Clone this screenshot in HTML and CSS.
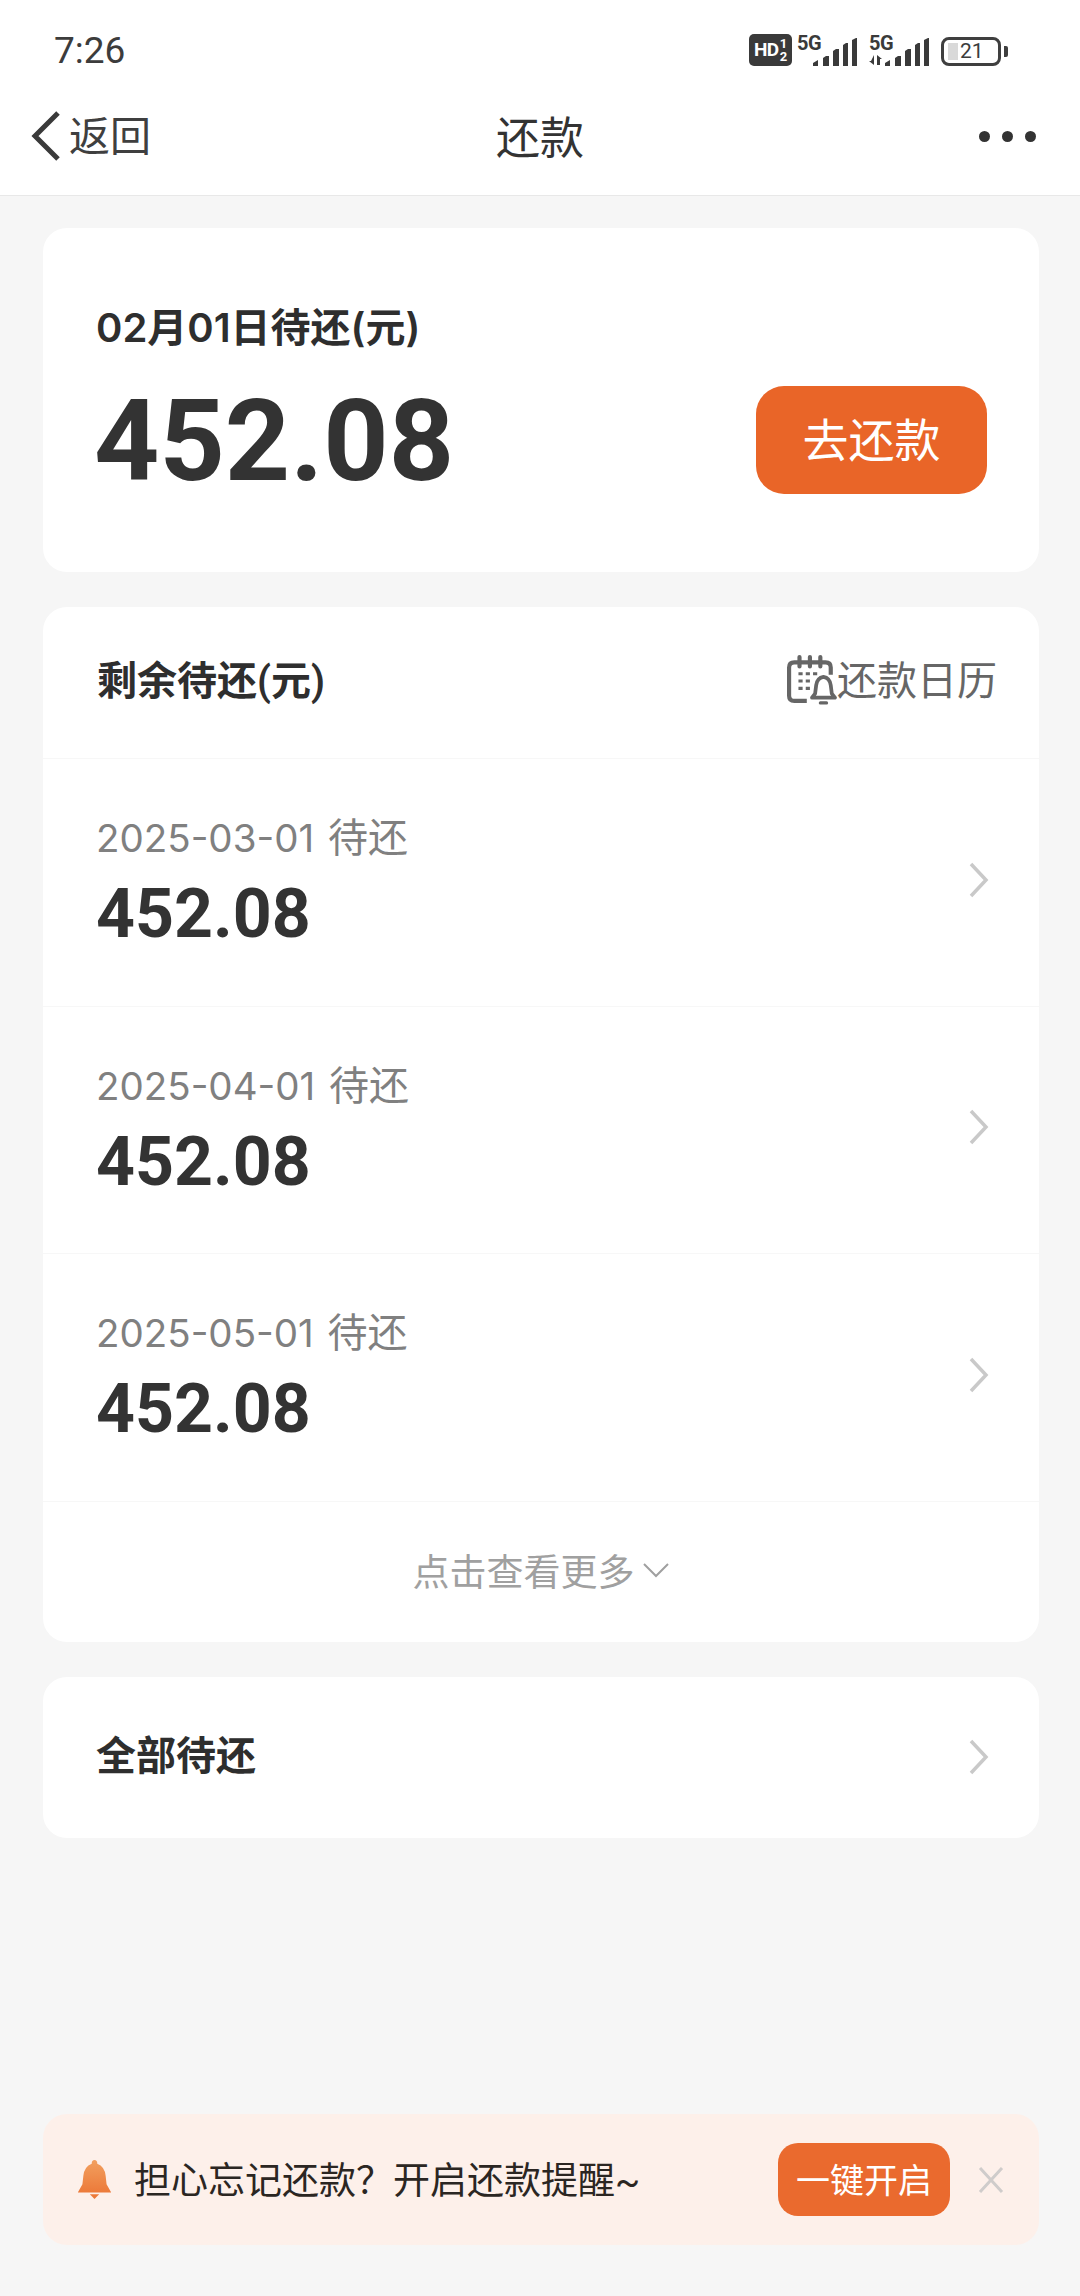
FILE: index.html
```html
<!DOCTYPE html>
<html lang="zh-CN">
<head>
<meta charset="utf-8">
<title>还款</title>
<link rel="stylesheet" href="styles.css">
</head>
<body>
<div class="page">
  <header class="top">
    <div class="status">
      <span class="time">7:26</span>
      <div class="status-icons">
        <span class="hd"><span class="hd-text">HD</span><span class="hd-frac"><span>1</span><span>2</span></span></span>
        <span class="net">
          <span class="fiveg">5G</span>
          <svg class="bars" width="44" height="30" viewBox="0 0 44 30"><path d="M0 30v-3l5-3v6zM10 30v-8l3-2h3v10zM20 30V15l3-2h3v17zM30 30V9l3-2h2v23zM39 30V4l4-2h1v28z" fill="#3a3a3a"/></svg>
        </span>
        <span class="net net2">
          <span class="fiveg">5G<svg class="arrows" width="14" height="10" viewBox="0 0 14 10"><path d="M5 0v10L0 6h2zM8 0l5 4h-2v6H8z" fill="#3a3a3a"/></svg></span>
          <svg class="bars" width="44" height="30" viewBox="0 0 44 30"><path d="M0 30v-3l5-3v6zM10 30v-8l3-2h3v10zM20 30V15l3-2h3v17zM30 30V9l3-2h2v23zM39 30V4l4-2h1v28z" fill="#3a3a3a"/></svg>
        </span>
        <span class="battery"><span class="battery-body"><span class="battery-fill"></span><span class="battery-num">21</span></span><span class="battery-tip"></span></span>
      </div>
    </div>
    <nav class="nav">
      <div class="back">
        <svg width="30" height="50" viewBox="0 0 30 50"><path d="M28 2 5 25l23 23" fill="none" stroke="#3a3a3a" stroke-width="5"/></svg>
        <span class="back-text">返回</span>
      </div>
      <h1 class="title">还款</h1>
      <div class="more"><i></i><i></i><i></i></div>
    </nav>
  </header>

  <main class="content">
    <section class="card due">
      <div class="due-info">
        <div class="due-label">02月01日待还(元)</div>
        <div class="due-amount">452.08</div>
      </div>
      <button class="pay"><span class="pay-text">去还款</span></button>
    </section>

    <section class="card">
      <div class="remain-head">
        <span class="remain-title">剩余待还(元)</span>
        <span class="calendar">
          <svg class="cal-icon" width="50" height="50" viewBox="0 0 48 48" fill="none" stroke="#666" stroke-width="4"><path d="M19 44H7q-5 0-5-5V12q0-5 5-5h30q5 0 5 5v7"/><path d="M12 2v9M22 2v9M32 2v9" stroke-linecap="round"/><path d="M11 18h4M18 18h4M25 18h4M11 25h4M18 25h4M11 32h4M18 32h4" stroke-width="3"/><path d="M35 21q6 1 7 8l1 8 3 4H24l3-4 1-8q1-7 7-8z" fill="#fff" stroke-width="3.6" stroke-linejoin="round"/><path d="M32 46h6" stroke-width="3" stroke-linecap="round"/></svg>
          <span>还款日历</span>
        </span>
      </div>
      <div class="row">
        <div class="row-text"><div class="row-date">2025-03-01 <span class="row-tag">待还</span></div><div class="row-amount">452.08</div></div>
        <svg class="chev" width="20" height="36" viewBox="0 0 20 36"><path d="M2 2l15 16L2 34" fill="none" stroke="#c9c9c9" stroke-width="3.5"/></svg>
      </div>
      <div class="row">
        <div class="row-text"><div class="row-date">2025-04-01 <span class="row-tag">待还</span></div><div class="row-amount">452.08</div></div>
        <svg class="chev" width="20" height="36" viewBox="0 0 20 36"><path d="M2 2l15 16L2 34" fill="none" stroke="#c9c9c9" stroke-width="3.5"/></svg>
      </div>
      <div class="row">
        <div class="row-text"><div class="row-date">2025-05-01 <span class="row-tag">待还</span></div><div class="row-amount">452.08</div></div>
        <svg class="chev" width="20" height="36" viewBox="0 0 20 36"><path d="M2 2l15 16L2 34" fill="none" stroke="#c9c9c9" stroke-width="3.5"/></svg>
      </div>
      <div class="more-row">
        <span>点击查看更多</span>
        <svg width="28" height="18" viewBox="0 0 28 18"><path d="M2 3l12 12L26 3" fill="none" stroke="#a0a0a0" stroke-width="2"/></svg>
      </div>
    </section>

    <section class="card all">
      <span class="all-title">全部待还</span>
      <svg class="chev" width="20" height="36" viewBox="0 0 20 36"><path d="M2 2l15 16L2 34" fill="none" stroke="#c9c9c9" stroke-width="3.5"/></svg>
    </section>
  </main>

  <aside class="banner">
    <svg class="bell" width="35" height="39" viewBox="0 0 36 42"><defs><linearGradient id="bellg" x1="0" y1="0" x2="0" y2="1"><stop offset="0" stop-color="#f2a05f"/><stop offset="1" stop-color="#ec7a3a"/></linearGradient></defs><path d="M18 0q3 0 3 4 8 3 9 13l1 9 5 9H0l5-9 1-9Q7 7 15 4q0-4 3-4z" fill="url(#bellg)"/><path d="M13 37h10l-5 5z" fill="#ec7a3a"/></svg>
    <span class="banner-text">担心忘记还款？开启还款提醒~</span>
    <button class="enable">一键开启</button>
    <svg class="close" width="26" height="26" viewBox="0 0 26 26"><path d="M2 1l22 24M24 1 2 25" stroke="#cfcccb" stroke-width="3"/></svg>
  </aside>
</div>
</body>
</html>
```

FILE: styles.css
```css
* { box-sizing: border-box; }
html, body { margin: 0; padding: 0; }
body {
  width: 1080px;
  height: 2296px;
  background: #f6f6f6;
  font-family: "Roboto", "Noto Sans CJK SC", sans-serif;
  color: #333;
  overflow: hidden;
}
.page { display: flex; flex-direction: column; height: 2296px; }
.top {
  height: 196px;
  background: #fff;
  border-bottom: 1px solid #e8e8e8;
  flex: none;
}
.status {
  height: 94px;
  padding: 28px 72px 0 54px;
  display: flex;
  justify-content: space-between;
  align-items: flex-start;
}
.time { font-size: 37px; line-height: 46px; color: #3c3c3c; font-weight: 400; }
.status-icons { display: flex; align-items: flex-start; gap: 5px; padding-top: 6px; margin-left: -2px; }
.hd {
  width: 43px; height: 32px;
  background: #3a3a3a; border-radius: 5px; color: #fff;
  display: flex; align-items: center; justify-content: center;
  font-weight: 700;
}
.hd-text { font-size: 19px; letter-spacing: -0.5px; line-height: 32px; }
.hd-frac { display: flex; flex-direction: column; font-size: 13px; line-height: 13px; margin-left: 1px; }
.net { display: flex; width: 60px; position: relative; height: 34px; justify-content: flex-end; margin-right: 7px; }
.fiveg {
  position: absolute; left: 0; top: -1px;
  font-size: 20px; line-height: 20px; font-weight: 700; color: #3a3a3a; letter-spacing: -0.5px;
}
.arrows { position: absolute; left: 0; top: 22px; }
.bars { margin-top: 2px; }
.battery { display: flex; align-items: center; height: 30px; margin-top: 2px; }
.battery-body {
  width: 60px; height: 29px; border: 3px solid #3f3f3f; border-radius: 8px;
  display: flex; align-items: center; padding-left: 4px; position: relative;
}
.battery-fill { width: 10px; height: 17px; background: #d9d9d9; }
.battery-num { font-size: 21px; line-height: 23px; color: #3c3c3c; margin-left: 2px; }
.battery-tip { width: 4px; height: 11px; background: #3f3f3f; border-radius: 0 2px 2px 0; margin-left: 3px; }
.nav {
  height: 84px;
  padding: 0 44px 0 30px;
  display: flex;
  align-items: center;
  justify-content: space-between;
  position: relative;
}
.back { display: flex; align-items: center; gap: 9px; font-size: 41px; color: #3f3f3f; line-height: 50px; }
.back-text { padding-top: 2px; }
.title {
  position: absolute; left: 0; right: 0; top: 3px; margin: 0;
  text-align: center; font-size: 44px; line-height: 84px; font-weight: 400; color: #333;
}
.more { display: flex; gap: 12px; }
.more i { width: 11px; height: 11px; border-radius: 50%; background: #333; display: block; }
.content { padding: 32px 41px 0 43px; display: flex; flex-direction: column; gap: 35px; }
.card { background: #fff; border-radius: 24px; }
.due {
  height: 344px;
  padding: 72px 52px 0 54px;
  display: flex;
  align-items: flex-start;
  justify-content: space-between;
}
.due-info { display: flex; flex-direction: column; }
.due-label { font-family: "Inter", "Noto Sans CJK SC", sans-serif; font-size: 40px; line-height: 56px; font-weight: 600; color: #2e2e2e; margin-left: -1px; }
.due-amount { font-size: 114px; line-height: 126px; font-weight: 700; color: #333; margin: 22px 0 0 -3px; }
.pay {
  width: 231px; height: 108px; border: 0; border-radius: 28px; margin-top: 86px;
  background: #e96528; color: #fff; font: inherit; font-size: 46px; padding: 0 0 6px;
}
.pay-text { display: block; }
.remain-head {
  height: 152px;
  padding: 0 42px 9px 54px;
  display: flex;
  align-items: center;
  justify-content: space-between;
  border-bottom: 1px solid #f7f7f7;
}
.remain-title { font-size: 40px; font-weight: 600; color: #2e2e2e; }
.calendar { display: flex; align-items: center; font-size: 40px; color: #666; }
.cal-icon { margin-top: 4px; }
.row {
  height: 247.5px;
  padding: 0 50px 0 53px;
  display: flex;
  align-items: center;
  justify-content: space-between;
  border-bottom: 1px solid #f7f7f7;
}
.row-text { padding-top: 3px; }
.row-date { font-family: "Inter", "Noto Sans CJK SC", sans-serif; font-size: 38.5px; line-height: 50px; color: #808080; }
.row-tag { font-size: 40px; margin-left: 3px; }
.row-amount { font-size: 68px; line-height: 80px; font-weight: 700; color: #333; margin-top: 11px; }
.chev { margin-top: -5px; }
.more-row {
  height: 140px;
  padding-bottom: 4px;
  display: flex;
  align-items: center;
  justify-content: center;
  gap: 7px;
  font-size: 37px;
  color: #a0a0a0;
}
.all {
  height: 161px;
  padding: 0 50px 0 53px;
  display: flex;
  align-items: center;
  justify-content: space-between;
}
.all .chev { margin-top: 0; }
.all-title { font-size: 40px; font-weight: 600; color: #2e2e2e; margin-bottom: 8px; }
.banner {
  margin: auto 41px 51px 43px;
  height: 131px;
  background: #fdf0ea;
  border-radius: 24px;
  padding: 0 35px 0 34px;
  display: flex;
  align-items: center;
}
.banner-text { font-size: 37px; color: #2b2622; margin: 0 0 4px 22px; flex: 1; white-space: nowrap; }
.enable {
  width: 172px; height: 73px; border: 0; border-radius: 20px; padding: 0 0 2px;
  background: #ea6a2e; color: #fff; font: inherit; font-size: 34px;
}
.close { margin-left: 28px; }
```
